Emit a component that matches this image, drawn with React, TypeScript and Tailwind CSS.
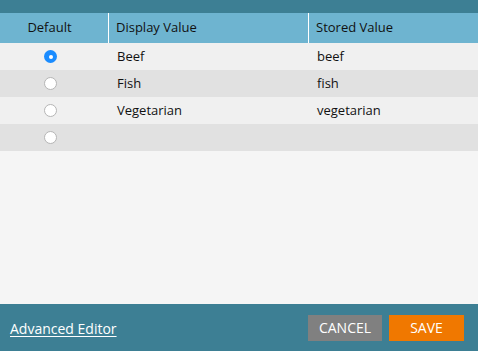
import { useState } from "react";

const rows = [
  { display: "Beef", stored: "beef" },
  { display: "Fish", stored: "fish" },
  { display: "Vegetarian", stored: "vegetarian" },
  { display: "", stored: "" },
];

function Radio({ checked, onClick }: { checked: boolean; onClick: () => void }) {
  if (checked) {
    return (
      <button onClick={onClick} className="flex h-[13px] w-[13px] items-center justify-center rounded-full bg-[#1a8cff]">
        <span className="h-[4px] w-[4px] rounded-full bg-white" />
      </button>
    );
  }
  return (
    <button onClick={onClick} className="h-[13px] w-[13px] rounded-full border border-[#b5b5b5] bg-white" />
  );
}

export default function App() {
  const [selected, setSelected] = useState(0);

  return (
    <div className="flex h-[351px] w-[478px] flex-col bg-[#f5f5f5] font-['Open_Sans',sans-serif] text-[13px] text-[#111]">
      <div className="h-[13px] bg-[#3d7f94]" />

      {/* Header */}
      <div className="flex h-[30px] bg-[#6eb4d0]">
        <div className="flex w-[109px] items-center justify-center border-r border-white pr-[9px]">Default</div>
        <div className="flex w-[200px] items-center border-r border-white pl-[7px]">Display Value</div>
        <div className="flex flex-1 items-center pl-[7px]">Stored Value</div>
      </div>

      {/* Rows */}
      <div className="flex-1">
        {rows.map((row, i) => (
          <div key={i} className={`flex h-[27px] items-center ${i % 2 === 0 ? "bg-[#f0f0f0]" : "bg-[#e1e1e1]"}`}>
            <div className="flex w-[109px] justify-center pr-[8px]">
              <Radio checked={selected === i} onClick={() => setSelected(i)} />
            </div>
            <div className="w-[200px] pl-[8px]">{row.display}</div>
            <div className="flex-1 pl-[8px]">{row.stored}</div>
          </div>
        ))}
      </div>

      {/* Footer */}
      <div className="flex h-[47px] items-center justify-between bg-[#3d7f94] pl-[10px] pr-[14px]">
        <a href="#" className="pt-[2px] text-[14px] text-white underline underline-offset-2">Advanced Editor</a>
        <div className="flex items-center gap-[7px]">
          <button className="h-[26px] w-[74px] bg-[#808080] text-[14px] text-white">CANCEL</button>
          <button className="h-[26px] w-[75px] bg-[#f07800] text-[14px] text-white">SAVE</button>
        </div>
      </div>
    </div>
  );
}
